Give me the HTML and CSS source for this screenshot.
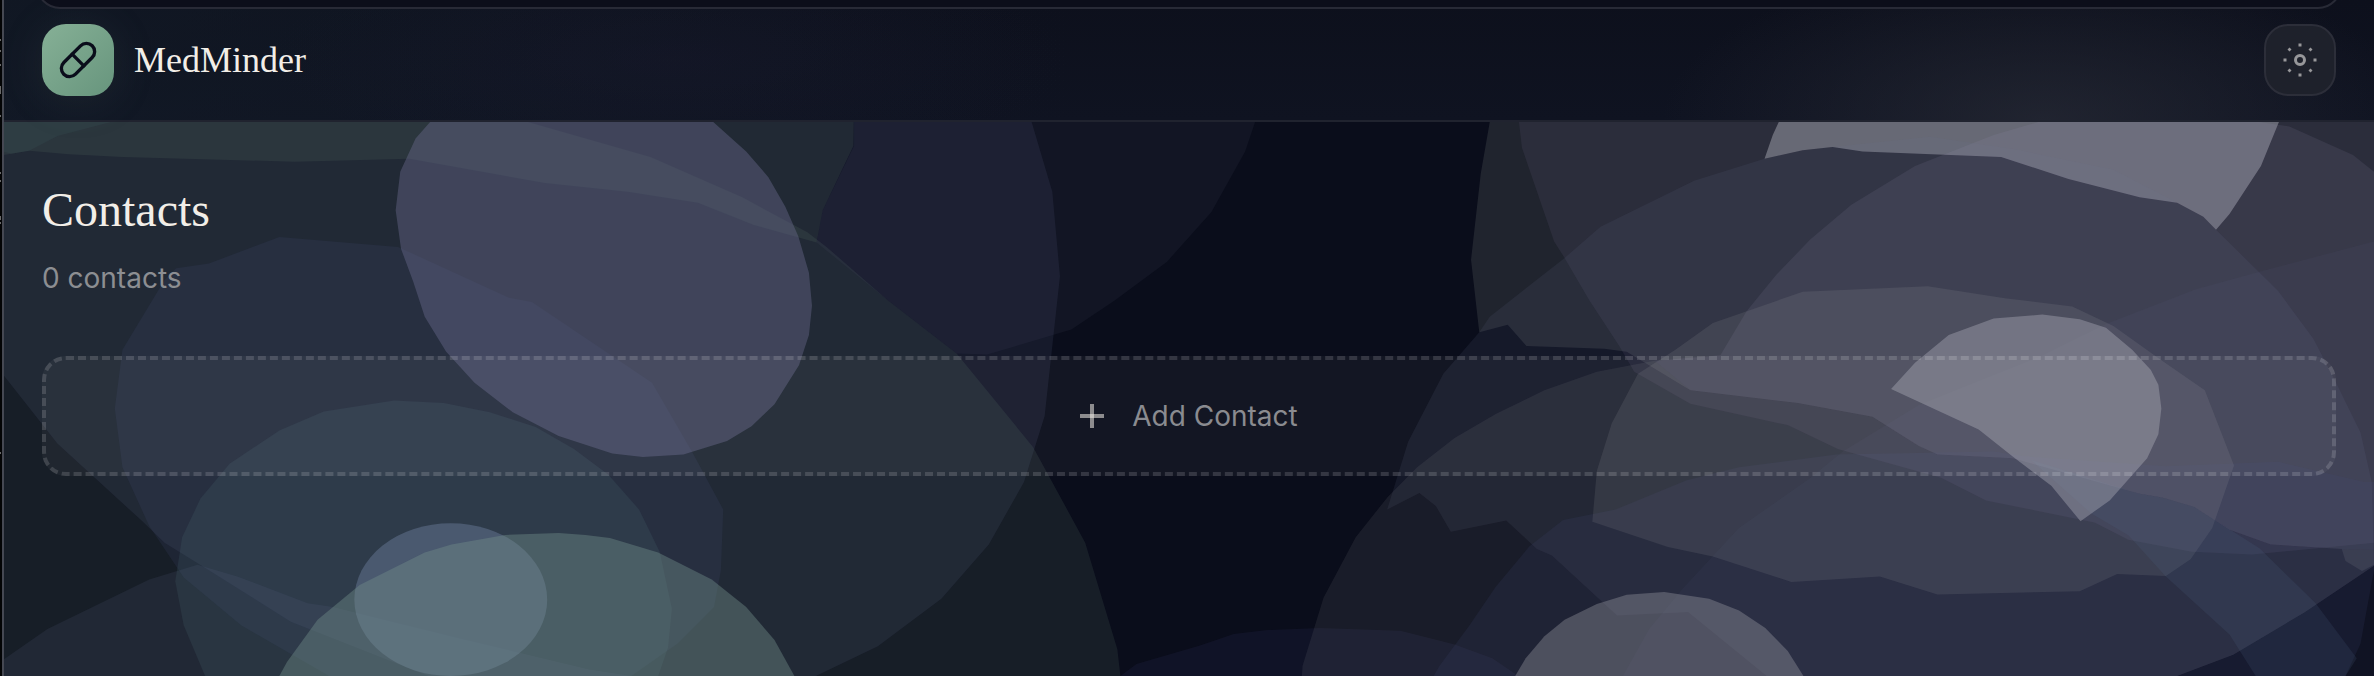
FILE: index.html
```
<!DOCTYPE html>
<html lang="en">
<head>
  <meta charset="UTF-8" />
  <meta name="viewport" content="width=device-width, initial-scale=1.0" />
  <title>MedMinder</title>
  <link rel="stylesheet" href="styles.css">
</head>
<body>
<svg class="backdrop" viewBox="0 0 2374 676" preserveAspectRatio="xMidYMin slice" aria-hidden="true">
  <!-- left cluster -->
  <svg class="cluster" x="0" y="100" width="1200" height="576" viewBox="0 0 1568 1568" preserveAspectRatio="none">
    <polygon fill="#121524" points="1116,0 1116,125 1075,300 1067,388 1160,545 1250,690 1290,693 1400,625 1457,545 1525,440 1583,305 1627,140 1640,60 1640,0" />
    <polygon fill="#5c6290" fill-opacity=".15" points="0,0 1335,0 1348,60 1375,250 1385,480 1365,860 1338,1040 1292,1210 1230,1358 1147,1487 1066,1568 560,1568 380,1420 273,1280 215,1205 185,1145 75,935 5,750 0,740" />
    <polygon fill="#678275" fill-opacity=".15" points="0,0 600,0 690,60 850,155 970,265 1055,360 1080,400 1160,545 1250,690 1350,945 1418,1205 1460,1495 1464,1568 0,1568" />
    <polygon fill="#6a8670" fill-opacity=".14" points="0,0 1116,0 1115,125 1075,300 1067,388 985,340 912,280 820,250 712,226 535,160 385,168 160,155 90,148 38,138 5,150 0,150" />
    <polygon fill="#4d7f80" fill-opacity=".1" points="0,60 145,60 75,98 38,138 15,146 0,138" />
    <polygon fill="#545d90" fill-opacity=".12" points="230,458 273,445 365,373 520,400 665,538 695,550 852,770 905,960 945,1115 942,1280 933,1380 885,1480 825,1568 430,1568 315,1430 240,1300 195,1160 160,1000 150,840 160,680 215,490" />
    <polygon fill="#67709c" fill-opacity=".12" points="0,1530 62,1440 195,1305 258,1265 310,1297 402,1370 435,1380 600,1465 770,1550 825,1568 0,1568" />
    <polygon fill="#577d87" fill-opacity=".15" points="515,818 580,825 640,850 700,890 750,950 795,1020 835,1115 862,1230 878,1385 873,1490 860,1568 268,1568 240,1430 229,1310 238,1190 262,1085 300,990 365,900 423,848" />
    <polygon fill="#6c6b8e" fill-opacity=".42" points="575,0 562,60 543,105 523,195 517,300 524,405 540,495 555,590 583,685 620,770 670,850 730,915 800,962 840,972 893,965 950,928 982,888 1012,828 1044,722 1057,640 1061,560 1057,470 1043,370 1026,290 1004,210 975,140 932,60 900,0" />
    <ellipse fill="#7588a8" fill-opacity=".4" cx="589" cy="1360" rx="126" ry="208" />
    <polygon fill="#72908a" fill-opacity=".42" points="365,1568 375,1530 415,1415 470,1320 555,1232 590,1210 660,1184 730,1179 765,1184 797,1192 860,1232 930,1305 975,1380 1012,1470 1038,1568" />
    <polygon fill="#4b5096" fill-opacity=".1" points="1464,1568 1485,1535 1568,1485 1612,1454 1656,1443 1725,1437 1830,1445 1901,1482 1950,1520 1984,1568" />
  </svg>
  <!-- right cluster -->
  <svg class="cluster" x="1200" y="100" width="1174" height="576" viewBox="0 0 1568 1568" preserveAspectRatio="none">
    <polygon fill="#a3a7a4" fill-opacity=".15" points="392,0 387,60 375,200 362,435 373,632 411,612 436,670 540,677 570,685 655,790 798,825 898,862 960,942 985,965 1085,975 1255,1072 1285,1082 1328,1108 1375,1170 1430,1210 1525,1222 1530,1255 1552,1282 1568,1265 1568,0" />
    <polygon fill="#8f82b0" fill-opacity=".1" points="423,0 426,60 430,130 473,385 487,430 520,545 560,670 580,740 655,827 785,885 852,950 990,1028 1050,1090 1195,1150 1240,1197 1325,1230 1405,1237 1568,1205 1568,0" />
    <polygon fill="#c2c4ce" fill-opacity=".4" points="785,0 773,60 765,95 754,160 805,137 845,128 885,140 1070,155 1160,215 1255,265 1305,280 1340,318 1357,353 1375,310 1417,180 1441,60 1450,0" />
    <polygon fill="#6e7198" fill-opacity=".12" points="250,1115 278,930 325,745 373,632 387,590 487,430 535,345 660,220 754,160 805,137 845,128 975,100 1090,135 1220,190 1305,280 1340,318 1357,353 1440,520 1487,650 1515,760 1550,905 1565,1040 1568,1268 1475,1395 1380,1510 1305,1568 757,1568 652,1394 557,1403 470,1240 450,1222 409,1145 335,1175 315,1105 293,1070" />
    <polygon fill="#a09ac0" fill-opacity=".11" points="1120,60 1060,95 955,180 870,285 815,380 770,475 730,575 695,695 607,710 655,790 798,825 898,862 960,942 985,965 1085,975 1255,1072 1285,1082 1328,1108 1375,1170 1430,1210 1525,1222 1568,1225 1568,195 1540,150 1455,72 1415,60" />
    <polygon fill="#a8a8a8" fill-opacity=".1" points="136,1568 137,1540 165,1355 208,1190 251,1080 290,1000 340,920 395,855 460,790 530,740 607,710 655,790 798,825 898,862 960,942 985,965 1085,975 1255,1072 1285,1082 1328,1108 1375,1170 1430,1210 1525,1222 1568,1225 1568,1268 1475,1395 1380,1510 1305,1568" />
    <polygon fill="#7478a8" fill-opacity=".06" points="1568,385 1420,465 1330,515 1210,610 1120,700 960,830 860,955 815,1030 720,1165 645,1330 600,1440 565,1568 1568,1568" />
    <polygon fill="#464b80" fill-opacity=".14" points="312,1568 320,1540 360,1430 395,1325 440,1215 485,1143 555,1115 650,1035 720,1000 850,965 1060,957 1100,970 1290,997 1440,985 1555,1040 1568,1040 1568,1280 1550,1480 1530,1568" />
    <polygon fill="#b5b5b8" fill-opacity=".12" points="972,507 805,522 685,607 635,680 585,745 550,880 530,1010 524,1148 625,1217 685,1243 790,1312 908,1297 985,1346 1175,1337 1225,1290 1290,1296 1323,1250 1352,1165 1381,995 1342,790 1285,710 1220,615 1165,562 1075,540" />
    <polygon fill="#506a8a" fill-opacity=".16" points="1110,980 1255,1072 1285,1082 1328,1108 1415,1220 1490,1370 1545,1520 1530,1568 1410,1568 1375,1455 1290,1297 1240,1185 1190,1125" />
    <polygon fill="#aeafbc" fill-opacity=".4" points="923,787 955,715 1000,640 1060,595 1125,584 1175,597 1210,620 1245,680 1270,735 1280,775 1284,840 1280,910 1265,975 1215,1090 1176,1147 1137,1050 1085,970 1040,897" />
    <polygon fill="#a0a0a8" fill-opacity=".36" points="421,1568 435,1520 460,1460 487,1415 530,1372 570,1347 620,1339 680,1358 720,1390 755,1437 785,1500 806,1568" />
  </svg>
</svg>
<svg class="gutter" width="2" height="676" aria-hidden="true">
  <path d="M0 39h1v2H0zM0 50h1v2H0zM0 64h1v2H0zM0 86h1v8H0zM0 115h1v2H0zM0 172h1v2H0zM0 180h1v2H0zM0 216h1v4H0zM0 222h1v2H0zM0 452h1v2H0z" />
</svg>
<div class="screen">
  <header class="topbar">
    <div class="sheet-edge"></div>
    <div class="brand">
      <span class="brand-mark">
        <svg class="pill" viewBox="0 0 24 24" aria-hidden="true">
          <path d="m10.5 20.5 10-10a4.95 4.95 0 1 0-7-7l-10 10a4.95 4.95 0 1 0 7 7Z" />
          <path d="m8.5 8.5 7 7" />
        </svg>
      </span>
      <span class="brand-name">MedMinder</span>
    </div>
    <button class="theme-button" type="button" aria-label="Theme">
      <svg class="sun" viewBox="0 0 40 40" aria-hidden="true">
        <circle class="ring" cx="20" cy="20" r="4.5" />
        <path d="M18.500 3.500h3v3h-3zM18.500 33.500h3v3h-3zM3.500 18.500h3v3h-3zM33.500 18.500h3v3h-3zM9.500 7.500l2 2-2 2-2-2zM30.500 7.500l2 2-2 2-2-2zM9.500 28.500l2 2-2 2-2-2zM30.500 28.500l2 2-2 2-2-2z" />
      </svg>
    </button>
  </header>
  <main class="content">
    <h1>Contacts</h1>
    <p class="count">0 contacts</p>
    <button class="add-contact" type="button">
      <svg class="plus" viewBox="0 0 24 24" aria-hidden="true">
        <path d="M0 12h24" />
        <path d="M12 0v24" />
      </svg>
      <span>Add Contact</span>
    </button>
  </main>
</div>
</body>
</html>
```
FILE: styles.css
```
* {
  box-sizing: border-box;
  margin: 0;
  padding: 0;
}
body {
  position: relative;
  min-height: 100vh;
  background: #0a0d1b;
  color: #f2eee8;
  font-family: Inter, "Open Sans", sans-serif;
  overflow: hidden;
}
.backdrop {
  position: absolute;
  top: 0;
  left: 0;
  width: 100%;
  height: 100%;
}
.cluster {
  overflow: visible;
}
.gutter {
  position: absolute;
  top: 0;
  left: 0;
  height: 100%;
  background: #030405;
  fill: #6a6a6a;
}
.screen {
  position: relative;
  min-height: 100vh;
  border-left: 2px solid #454852;
  margin-left: 2px;
}
.topbar {
  position: relative;
  display: flex;
  align-items: center;
  justify-content: space-between;
  padding: 24px 38px;
  border-bottom: 2px solid #20232f;
  background:
    radial-gradient(ellipse 380px 160px at 86% 100%, rgba(42, 45, 56, 0.65), transparent),
    radial-gradient(ellipse 400px 110px at 28% 50%, rgba(28, 28, 50, 0.3), transparent),
    linear-gradient(90deg, rgba(19, 28, 40, 0.6), transparent 45%),
    linear-gradient(#0d101c, #0f1321);
}
/* lower edge of the sheet above */
.sheet-edge {
  position: absolute;
  top: -51px;
  left: 32px;
  right: 32px;
  height: 60px;
  border: 2px solid #282a36;
  border-radius: 0 0 24px 24px;
  background: #0c0e1a;
}
.brand {
  display: flex;
  align-items: center;
  gap: 20px;
}
.brand-mark {
  display: flex;
  align-items: center;
  justify-content: center;
  width: 72px;
  height: 72px;
  border-radius: 24px;
  background: linear-gradient(135deg, #86b096, #67957d);
  box-shadow: 0 4px 48px rgba(134, 160, 150, 0.1);
}
.pill {
  width: 40px;
  height: 40px;
  fill: none;
  stroke: #0a0d1b;
  stroke-width: 2;
  stroke-linecap: round;
  stroke-linejoin: round;
}
.brand-name,
h1 {
  font-family: "Liberation Serif", serif;
  font-weight: 400;
}
.brand-name {
  font-size: 36px;
  line-height: 48px;
}
.theme-button {
  display: flex;
  align-items: center;
  justify-content: center;
  width: 72px;
  height: 72px;
  border: 2px solid #2c2e39;
  border-radius: 24px;
  background: #1e212b;
}
.sun {
  width: 40px;
  height: 40px;
  fill: #97979a;
}
.ring {
  fill: none;
  stroke: #97979a;
  stroke-width: 3;
}
.content {
  padding: 52px 38px;
}
h1 {
  font-size: 48px;
  line-height: 72px;
}
.count {
  margin-top: 12px;
  color: #8c8e92;
  font-size: 28px;
  font-weight: 400;
  line-height: 40px;
}
.add-contact {
  display: flex;
  align-items: center;
  justify-content: center;
  gap: 28px;
  width: 100%;
  height: 120px;
  margin-top: 58px;
  border: 4px dashed rgba(255, 255, 255, 0.14);
  border-radius: 24px;
  background: rgba(255, 255, 255, 0.04);
  color: #8a8b90;
  font-family: inherit;
  font-size: 28px;
  font-weight: 400;
}
.plus {
  width: 24px;
  height: 24px;
  stroke: rgba(242, 238, 232, 0.55);
  stroke-width: 4;
}
```
